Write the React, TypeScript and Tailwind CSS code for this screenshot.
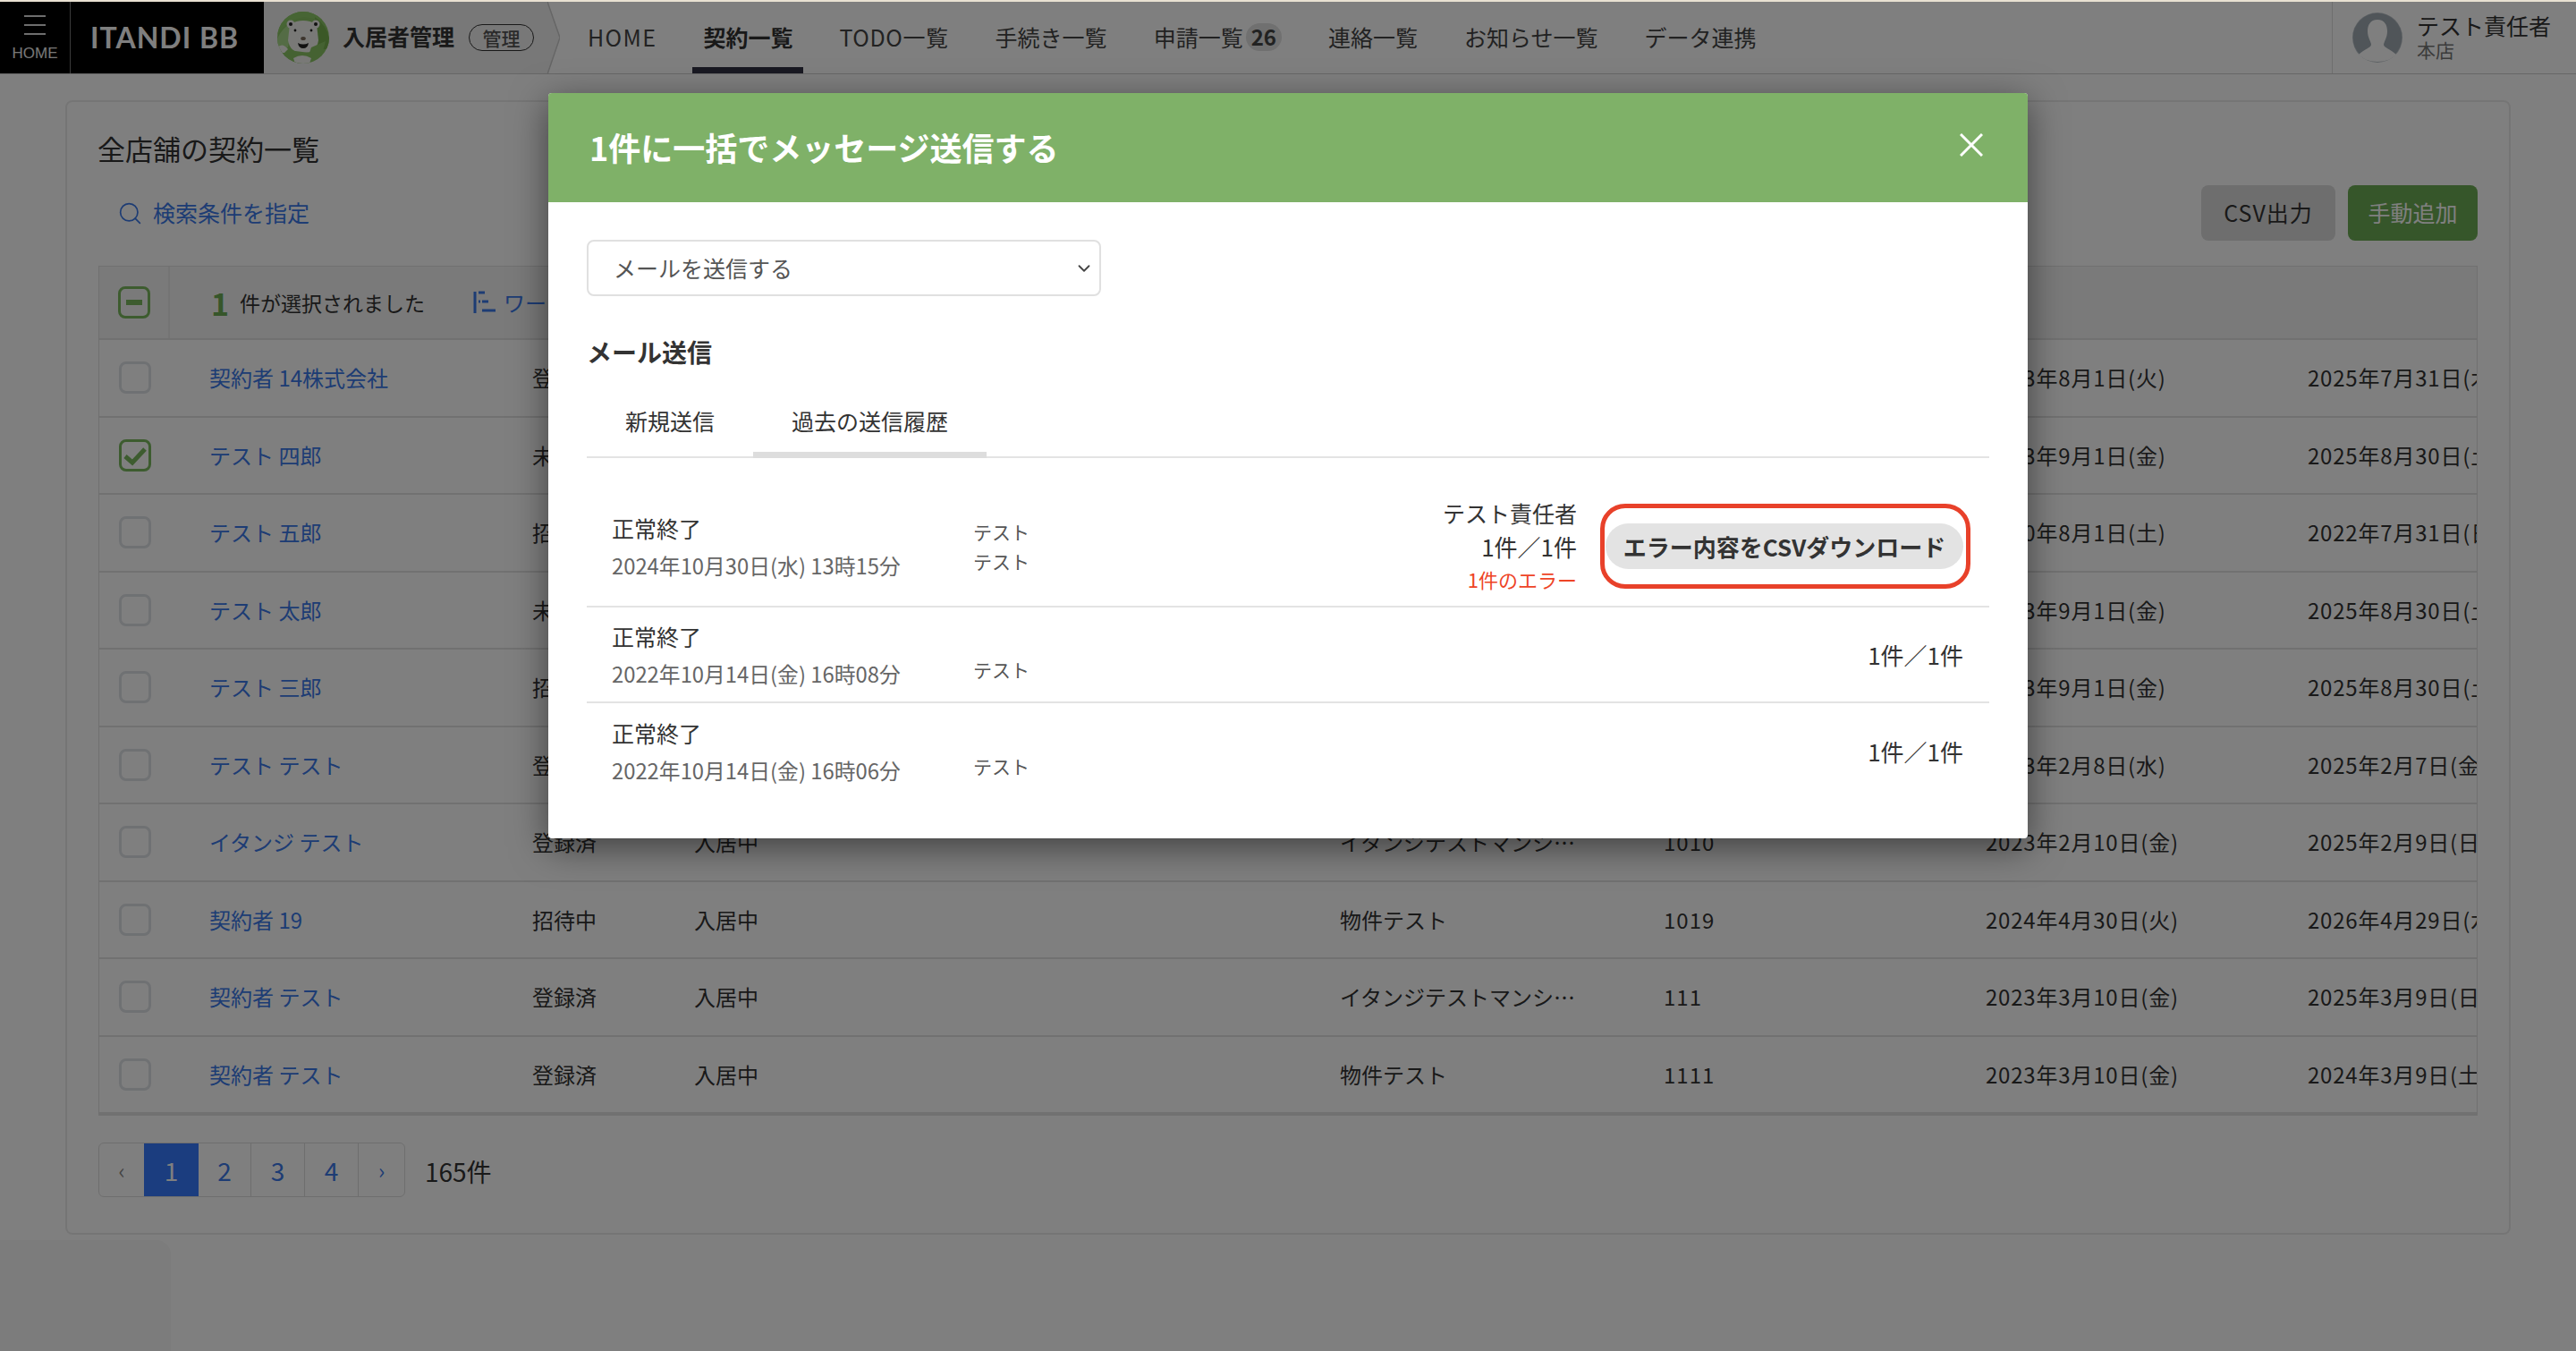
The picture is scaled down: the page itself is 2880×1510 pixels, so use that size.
import { ChevronDown, Search } from 'lucide-react'

const rows = [
  { name: '契約者 14株式会社', status: '登録済', state: '入居中', building: '物件テスト', room: '114', start: '2023年8月1日(火)', end: '2025年7月31日(木)' },
  { name: 'テスト 四郎', status: '未登録', state: '入居中', building: '物件テスト', room: '101', start: '2023年9月1日(金)', end: '2025年8月30日(土)', checked: true },
  { name: 'テスト 五郎', status: '招待中', state: '入居中', building: '物件テスト', room: '102', start: '2020年8月1日(土)', end: '2022年7月31日(日)' },
  { name: 'テスト 太郎', status: '未登録', state: '入居中', building: '物件テスト', room: '103', start: '2023年9月1日(金)', end: '2025年8月30日(土)' },
  { name: 'テスト 三郎', status: '招待中', state: '入居中', building: '物件テスト', room: '104', start: '2023年9月1日(金)', end: '2025年8月30日(土)' },
  { name: 'テスト テスト', status: '登録済', state: '入居中', building: '物件テスト', room: '105', start: '2023年2月8日(水)', end: '2025年2月7日(金)' },
  { name: 'イタンジ テスト', status: '登録済', state: '入居中', building: 'イタンジテストマンシ…', room: '1010', start: '2023年2月10日(金)', end: '2025年2月9日(日)' },
  { name: '契約者 19', status: '招待中', state: '入居中', building: '物件テスト', room: '1019', start: '2024年4月30日(火)', end: '2026年4月29日(水)' },
  { name: '契約者 テスト', status: '登録済', state: '入居中', building: 'イタンジテストマンシ…', room: '111', start: '2023年3月10日(金)', end: '2025年3月9日(日)' },
  { name: '契約者 テスト', status: '登録済', state: '入居中', building: '物件テスト', room: '1111', start: '2023年3月10日(金)', end: '2024年3月9日(土)' },
]

const history = [
  { date: '2022年10月14日(金) 16時08分' },
  { date: '2022年10月14日(金) 16時06分' },
]

function Bear() {
  return (
    <svg width="58" height="58" viewBox="0 0 58 58" className="shrink-0">
      <defs>
        <clipPath id="bear-clip">
          <circle cx="29" cy="29" r="29" />
        </clipPath>
      </defs>
      <g clipPath="url(#bear-clip)">
        <rect width="58" height="58" fill="#8bc565" />
        <path d="M0 26 Q12 8 30 6 L58 10 L58 0 L0 0Z" fill="#8fcb68" />
        <path d="M42 6 Q56 16 58 30 L58 42 L46 42 Z" fill="#76b04f" />
        <path d="M0 30 Q6 18 16 12 L12 40 L0 38Z" fill="#a8d88a" />
        <path d="M14 14 Q29 6 44 14 L46 32 Q44 46 29 46 Q14 46 12 32Z" fill="#f2f2ee" />
        <circle cx="15" cy="14" r="4.5" fill="#f2f2ee" />
        <circle cx="43" cy="14" r="4.5" fill="#f2f2ee" />
        <circle cx="15" cy="14" r="2" fill="#222" />
        <circle cx="43" cy="14" r="2" fill="#222" />
        <circle cx="20" cy="21" r="1.4" fill="#222" />
        <circle cx="38" cy="21" r="1.4" fill="#222" />
        <ellipse cx="29" cy="30" rx="2.8" ry="2" fill="#7a6a5a" />
        <path d="M23 35 Q29 38 35 35 Q34 41 29 41 Q24 41 23 35Z" fill="#222" />
        <path d="M4 42 L36 46 L38 40 L54 33 L50 48 L30 58 L0 58Z" fill="#8bc565" />
        <path d="M18 52 Q28 46 38 52 L36 58 L20 58Z" fill="#f2f2ee" />
        <path d="M0 40 Q6 34 12 42 L8 46 L0 46Z" fill="#f2f2ee" />
      </g>
    </svg>
  )
}

function Avatar() {
  return (
    <svg width="58" height="58" viewBox="0 0 58 58" className="shrink-0">
      <circle cx="29" cy="29" r="28" fill="#a0abb3" stroke="#ffffff" strokeOpacity="0.3" strokeWidth="1.5" />
      <path
        d="M29 9 C37 9 40 15 40 22 C40 29 36 34 36 37 C36 40 44 42 50 48 C45 53 38 56 29 56 C20 56 13 53 8 48 C14 42 22 40 22 37 C22 34 18 29 18 22 C18 15 21 9 29 9Z"
        fill="#ffffff"
      />
    </svg>
  )
}

function Checkbox({ checked, partial }: { checked?: boolean; partial?: boolean }) {
  const on = checked || partial
  return (
    <div className={`w-[36px] h-[36px] rounded-[8px] border-[3px] flex items-center justify-center ${on ? 'border-[#7ab95f]' : 'border-[#dfe2e6]'}`}>
      {partial && <div className="w-[18px] h-[6px] bg-[#7ab95f]" />}
      {checked && (
        <svg width="28" height="24" viewBox="0 0 28 24">
          <path d="M3 13 L11 20 L25 5" fill="none" stroke="#7ab95f" strokeWidth="5" />
        </svg>
      )}
    </div>
  )
}

function NavItem({ label, active, badge, className }: { label: string; active?: boolean; badge?: string; className?: string }) {
  return (
    <div className={`h-[80px] px-[12px] flex items-center gap-[3px] border-b-[7px] pt-[5px] ${active ? 'border-[#333344] font-bold text-[#333]' : 'border-transparent text-[#444]'}`}>
      <span className={className}>{label}</span>
      {badge && <span className="h-[31px] px-[6px] rounded-full bg-[#e0e0e0] flex items-center text-[24px] font-bold text-[#444]">{badge}</span>}
    </div>
  )
}

export default function App() {
  return (
    <div className="relative w-[2880px] h-[1510px] overflow-hidden bg-white font-['Noto_Sans_CJK_JP','Liberation_Sans',sans-serif] text-[#333]">
      <div className="h-[2px] bg-[#e9e1d2]" />

      <header className="h-[81px] flex border-b border-[#cfcfcf] text-[25px] leading-none">
        <div className="w-[79px] bg-black flex flex-col items-center pt-[15px] text-[#fff] border-r border-[#777]">
          <div className="w-[24px] h-[22px] border-y-2 border-[#ddd] flex items-center">
            <div className="w-full h-[2px] bg-[#ddd]" />
          </div>
          <span className="mt-[12px] text-[17px] font-['Liberation_Sans',sans-serif] text-[#eee]">HOME</span>
        </div>
        <div className="w-[216px] bg-black flex items-center pl-[22px] text-white font-['Lato',sans-serif] text-[32px] font-bold tracking-[1px]">
          ITANDI BB
        </div>
        <div className="w-[317px] bg-[#f0f0f0] flex items-center pl-[15px]">
          <Bear />
          <span className="ml-[15px] font-bold text-[25px] pb-[3px]">入居者管理</span>
          <span className="ml-[16px] w-[73px] h-[30px] rounded-full border border-[#333] flex items-center justify-center text-[21px] font-medium text-[#555]">管理</span>
        </div>
        <svg width="14" height="81" viewBox="0 0 14 81" className="shrink-0">
          <path d="M0 0 L14 40 L0 81Z" fill="#f0f0f0" />
          <path d="M0 0 L14 40 L0 81" fill="none" stroke="#cccccc" strokeWidth="1.5" />
        </svg>
        <nav className="ml-[19px] flex gap-[28px]">
          <NavItem label="HOME" className="tracking-[1.4px]" />
          <NavItem label="契約一覧" active />
          <NavItem label="TODO一覧" className="tracking-[0.6px]" />
          <NavItem label="手続き一覧" />
          <NavItem label="申請一覧" badge="26" />
          <NavItem label="連絡一覧" />
          <NavItem label="お知らせ一覧" />
          <NavItem label="データ連携" />
        </nav>
        <div className="ml-auto w-[273px] border-l border-[#dcdcdc] flex items-center pl-[21px]">
          <Avatar />
          <div className="ml-[15px] flex flex-col pb-[3px]">
            <span className="text-[25px] text-[#333]">テスト責任者</span>
            <span className="mt-[4px] text-[21px] text-[#777]">本店</span>
          </div>
        </div>
      </header>

      <main className="mx-[73px] mt-[29px] h-[1268px] rounded-[8px] border-2 border-[#ebebeb] px-[35px]">
        <h1 className="pt-[36px] -ml-[1px] text-[31px] leading-[32px] text-[#333]">全店舗の契約一覧</h1>
        <div className="mt-[25px] h-[62px] flex items-center justify-between">
          <div className="flex items-center pl-[21px] text-[25px] text-[#3a78e8]">
            <Search size={29} strokeWidth={1.4} />
            <span className="ml-[11px]">検索条件を指定</span>
          </div>
          <div className="flex gap-[14px] text-[25px]">
            <div className="w-[150px] h-[62px] rounded-[8px] bg-[#dcdcdc] flex items-center justify-center tracking-[1px]">CSV出力</div>
            <div className="w-[145px] h-[62px] rounded-[8px] bg-[#6cac54] flex items-center justify-center text-white">手動追加</div>
          </div>
        </div>

        <div className="mt-[28px] border border-[#e0e0e0] border-b-0 overflow-hidden whitespace-nowrap text-[24px]">
          <div className="h-[82px] bg-[#f5f5f5] flex border-b-2 border-[#e3e3e3]">
            <div className="w-[79px] shrink-0 border-r-2 border-[#e8e8e8] flex items-center justify-center">
              <Checkbox partial />
            </div>
            <div className="pl-[46px] flex items-center">
              <span className="text-[#6cac54] text-[34px] font-bold">1</span>
              <span className="ml-[12px] text-[23px]">件が選択されました</span>
              <svg width="28" height="28" viewBox="0 0 28 28" className="ml-[54px] text-[#3a78e8]">
                <path d="M2 2 V26 M6 3 H13 M10 13 H17 M10 23 H25 M6 13 H8" fill="none" stroke="currentColor" strokeWidth="3" />
              </svg>
              <span className="ml-[6px] text-[#3a78e8]">ワークフロー</span>
            </div>
          </div>
          {rows.map((row, i) => (
            <div key={i} className="h-[86.5px] grid grid-cols-[79px_360px_181px_723px_360px_360px_363px_233px] items-center border-b-2 border-[#e3e3e3]">
              <div className="flex justify-center">
                <Checkbox checked={row.checked} />
              </div>
              <div className="pl-[44px] text-[#3a78e8]">{row.name}</div>
              <div className="pl-[45px]">{row.status}</div>
              <div className="pl-[45px]">{row.state}</div>
              <div className="pl-[44px]">{row.building}</div>
              <div className="pl-[46px] tracking-[1px]">{row.room}</div>
              <div className="pl-[46px] tracking-[0.8px]">{row.start}</div>
              <div className="pl-[43px] overflow-hidden tracking-[0.8px]">{row.end}</div>
            </div>
          ))}
        </div>
        <div className="h-[2px] border-b-2 border-[#e3e3e3]" />

        <div className="mt-[30px] flex items-center">
          <div className="flex h-[61px] text-[28px] text-[#3a78e8] border border-[#ddd] rounded-[6px]">
            <div className="w-[50px] flex items-center justify-center text-[#888] text-[24px]">‹</div>
            <div className="w-[61px] bg-[#367aff] text-white flex items-center justify-center">1</div>
            <div className="w-[59px] flex items-center justify-center border-r border-[#ddd]">2</div>
            <div className="w-[60px] flex items-center justify-center border-r border-[#ddd]">3</div>
            <div className="w-[60px] flex items-center justify-center border-r border-[#ddd]">4</div>
            <div className="w-[51px] flex items-center justify-center text-[24px]">›</div>
          </div>
          <span className="ml-[22px] pt-[3px] text-[28px]">165件</span>
        </div>
      </main>

      <div className="absolute left-0 bottom-0 w-[191px] h-[124px] rounded-tr-[16px] bg-[#f8f8f8]" />

      <div className="absolute inset-x-0 top-[2px] bottom-0 bg-black/50 flex justify-center pt-[102px]">
        <div className="w-[1654px] h-[833px] bg-white rounded-[4px] overflow-hidden shadow-[0_10px_40px_rgba(0,0,0,0.5)]">
          <div className="h-[122px] bg-[#7fb168] flex items-center justify-between pl-[46px] pr-[50px] text-white">
            <span className="text-[36px] font-bold pb-[3px]">1件に一括でメッセージ送信する</span>
            <svg width="26" height="26" viewBox="0 0 26 26" className="mb-[6px]">
              <path d="M1 1 L25 25 M25 1 L1 25" stroke="#fff" strokeWidth="3" />
            </svg>
          </div>

          <div className="pl-[43px] pr-[43px]">
            <div className="mt-[42px] w-[575px] h-[63px] border-2 border-[#e0e0e0] rounded-[8px] flex items-center justify-between pl-[28px] pr-[6px] text-[25px] text-[#555]">
              <span>メールを送信する</span>
              <ChevronDown size={22} strokeWidth={2} className="text-[#444]" />
            </div>
            <h2 className="mt-[44px] text-[28px] leading-[36px] font-bold">メール送信</h2>

            <div className="mt-[29px] h-[72px] flex border-b-2 border-[#e3e3e3] text-[25px]">
              <div className="px-[43px] pt-[12px]">新規送信</div>
              <div className="px-[43px] pt-[12px] border-b-[7px] border-[#dddddd] h-[72px]">過去の送信履歴</div>
            </div>

            <div className="pt-[32px]">
              <div className="h-[135px] flex items-center pl-[28px] pr-[29px] border-b-2 border-[#e3e3e3]">
                <div className="w-[404px]">
                  <div className="text-[25px] leading-[42px]">正常終了</div>
                  <div className="text-[23.8px] leading-[42px] text-[#666]">2024年10月30日(水) 13時15分</div>
                </div>
                <div className="text-[21px] leading-[33px] text-[#555]">
                  <div>テスト</div>
                  <div>テスト</div>
                </div>
                <div className="ml-auto text-right text-[25px] leading-[37px]">
                  <div>テスト責任者</div>
                  <div className="text-[26px]">1件／1件</div>
                  <div className="text-[22px] text-[#ee4426]">1件のエラー</div>
                </div>
                <div className="relative ml-[32px] w-[400px] h-[51px] rounded-full bg-[#e3e3e3] flex items-center justify-center text-[26px] font-bold whitespace-nowrap">
                  エラー内容をCSVダウンロード
                  <div className="absolute -left-[6px] -right-[8px] -top-[22px] -bottom-[22px] rounded-[28px] border-[5px] border-[#e8412a]" />
                </div>
              </div>
              {history.map((item, i) => (
                <div key={i} className={`h-[107px] flex items-center pl-[28px] pr-[29px] ${i === 0 ? 'border-b-2 border-[#e3e3e3]' : ''}`}>
                  <div className="w-[404px]">
                    <div className="text-[25px] leading-[42px]">正常終了</div>
                    <div className="text-[23.8px] leading-[42px] text-[#666]">{item.date}</div>
                  </div>
                  <div className="pt-[34px] text-[21px] leading-[33px] text-[#555]">テスト</div>
                  <div className="ml-auto text-[26px]">1件／1件</div>
                </div>
              ))}
            </div>
          </div>
        </div>
      </div>
    </div>
  )
}
